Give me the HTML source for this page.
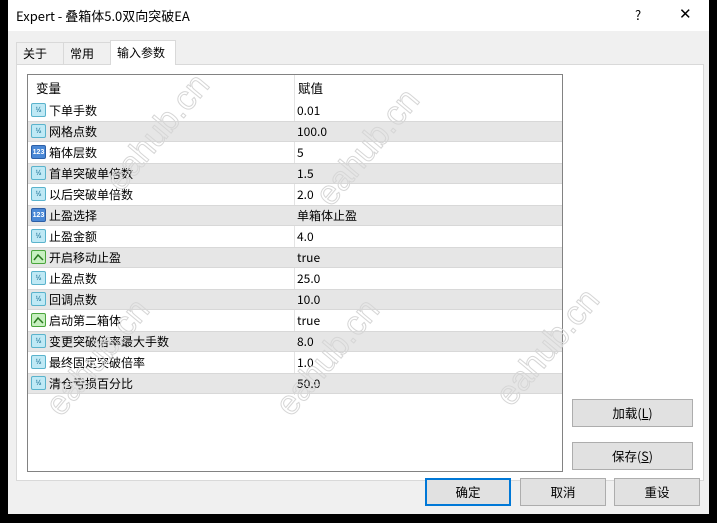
<!DOCTYPE html>
<html><head><meta charset="utf-8"><style>
*{margin:0;padding:0;box-sizing:border-box}
body{width:717px;height:523px;background:#000;position:relative;overflow:hidden;font-family:"Noto Sans CJK SC","Liberation Sans",sans-serif;font-size:12px;color:#000;line-height:15px}
.dlg{position:absolute;left:8px;top:0;width:701px;height:514px;background:#f0f0f0}
.title{position:absolute;left:0;top:0;width:701px;height:31px;background:#fff;font-size:13px}
.title .t{position:absolute;left:8px;top:8px}
.title .q{position:absolute;left:627px;top:7px;font-size:13px}
.title .x{position:absolute;left:671px;top:6px;font-size:15px}
.tab{position:absolute;top:42px;height:22px;border:1px solid #d9d9d9;border-bottom:none;background:#f0f0f0;padding:3px 0 0 6px}
.tab.on{background:#fff;top:40px;height:25px;padding-top:4px;border-color:#d9d9d9}
.panel{position:absolute;left:8px;top:64px;width:688px;height:417px;background:#fff;border:1px solid #d9d9d9}
.tbl{position:absolute;left:19px;top:74px;width:536px;height:398px;background:#fff;border:1px solid #828282;overflow:hidden}
.hdr{position:absolute;left:0;top:0;width:534px;height:25px;font-size:12.5px}
.hdr span{position:absolute;top:5px}
.vl{position:absolute;left:266px;top:0;width:1px;height:320px;background:#e3e3e3}
.row{position:absolute;left:0;width:534px;height:21px}
.row.g{background:#e6e6e6;border-top:1px solid #d8d8d8;border-bottom:1px solid #d8d8d8}
.row .n{position:absolute;left:21px;top:3px}
.row .v{position:absolute;left:269px;top:3px}
.row.g .n,.row.g .v{top:2px}
.ic{position:absolute;left:3px;top:3px;width:15px;height:14px;border-radius:2px;font-size:7px;line-height:13px;text-align:center;font-weight:bold;font-style:normal;font-family:"Liberation Sans",sans-serif}
.row.g .ic{top:2px}
.ic.h{background:#bfe9f5;border:1px solid #5ab3cc;color:#2a7d9e}
.ic.n3{background:#4a88d6;border:1px solid #2d5fa6;color:#fff}
.ic.b{background:#c7f0c0;border:1px solid #4aa53c}
.btn{position:absolute;width:121px;height:28px;background:#e1e1e1;border:1px solid #adadad;text-align:center;line-height:26px;font-size:12.5px}
.btn.def{border:2px solid #0078d7;line-height:24px}
.wm{position:absolute;font-family:"Liberation Sans",sans-serif;font-size:34px;color:transparent;-webkit-text-stroke:1px #d6d6d6;transform:rotate(-50deg);white-space:nowrap;pointer-events:none}
</style></head><body>
<div class="dlg">
<div class="title"><span class="t">Expert - 叠箱体5.0双向突破EA</span><span class="q">?</span><span class="x">✕</span></div>
<div class="tab" style="left:8px;width:48px">关于</div>
<div class="tab" style="left:55px;width:48px">常用</div>
<div class="panel"></div>
<div class="tab on" style="left:102px;width:66px">输入参数</div>
<div class="tbl">
<div class="hdr"><span style="left:8px">变量</span><span style="left:270px">赋值</span></div>
<div class="vl"></div>
<div class="row" style="top:25px"><i class="ic h">½</i><span class="n">下单手数</span><span class="v">0.01</span></div>
<div class="row g" style="top:46px"><i class="ic h">½</i><span class="n">网格点数</span><span class="v">100.0</span></div>
<div class="row" style="top:67px"><i class="ic n3">123</i><span class="n">箱体层数</span><span class="v">5</span></div>
<div class="row g" style="top:88px"><i class="ic h">½</i><span class="n">首单突破单倍数</span><span class="v">1.5</span></div>
<div class="row" style="top:109px"><i class="ic h">½</i><span class="n">以后突破单倍数</span><span class="v">2.0</span></div>
<div class="row g" style="top:130px"><i class="ic n3">123</i><span class="n">止盈选择</span><span class="v">单箱体止盈</span></div>
<div class="row" style="top:151px"><i class="ic h">½</i><span class="n">止盈金额</span><span class="v">4.0</span></div>
<div class="row g" style="top:172px"><i class="ic b"><svg width="13" height="12"><path d="M2 9 L6 4 L11 9" stroke="#2a7a20" stroke-width="1.5" fill="none"/></svg></i><span class="n">开启移动止盈</span><span class="v">true</span></div>
<div class="row" style="top:193px"><i class="ic h">½</i><span class="n">止盈点数</span><span class="v">25.0</span></div>
<div class="row g" style="top:214px"><i class="ic h">½</i><span class="n">回调点数</span><span class="v">10.0</span></div>
<div class="row" style="top:235px"><i class="ic b"><svg width="13" height="12"><path d="M2 9 L6 4 L11 9" stroke="#2a7a20" stroke-width="1.5" fill="none"/></svg></i><span class="n">启动第二箱体</span><span class="v">true</span></div>
<div class="row g" style="top:256px"><i class="ic h">½</i><span class="n">变更突破倍率最大手数</span><span class="v">8.0</span></div>
<div class="row" style="top:277px"><i class="ic h">½</i><span class="n">最终固定突破倍率</span><span class="v">1.0</span></div>
<div class="row g" style="top:298px"><i class="ic h">½</i><span class="n">清仓亏损百分比</span><span class="v">50.0</span></div>
</div>
<div class="btn" style="left:564px;top:399px">加载(<u>L</u>)</div>
<div class="btn" style="left:564px;top:442px">保存(<u>S</u>)</div>
<div class="btn def" style="left:417px;top:478px;width:86px">确定</div>
<div class="btn" style="left:512px;top:478px;width:86px">取消</div>
<div class="btn" style="left:606px;top:478px;width:86px">重设</div>
<div class="wm" style="left:80px;top:125px">eahub.cn</div>
<div class="wm" style="left:290px;top:140px">eahub.cn</div>
<div class="wm" style="left:20px;top:350px">eahub.cn</div>
<div class="wm" style="left:250px;top:350px">eahub.cn</div>
<div class="wm" style="left:470px;top:340px">eahub.cn</div>
</div>
</body></html>
